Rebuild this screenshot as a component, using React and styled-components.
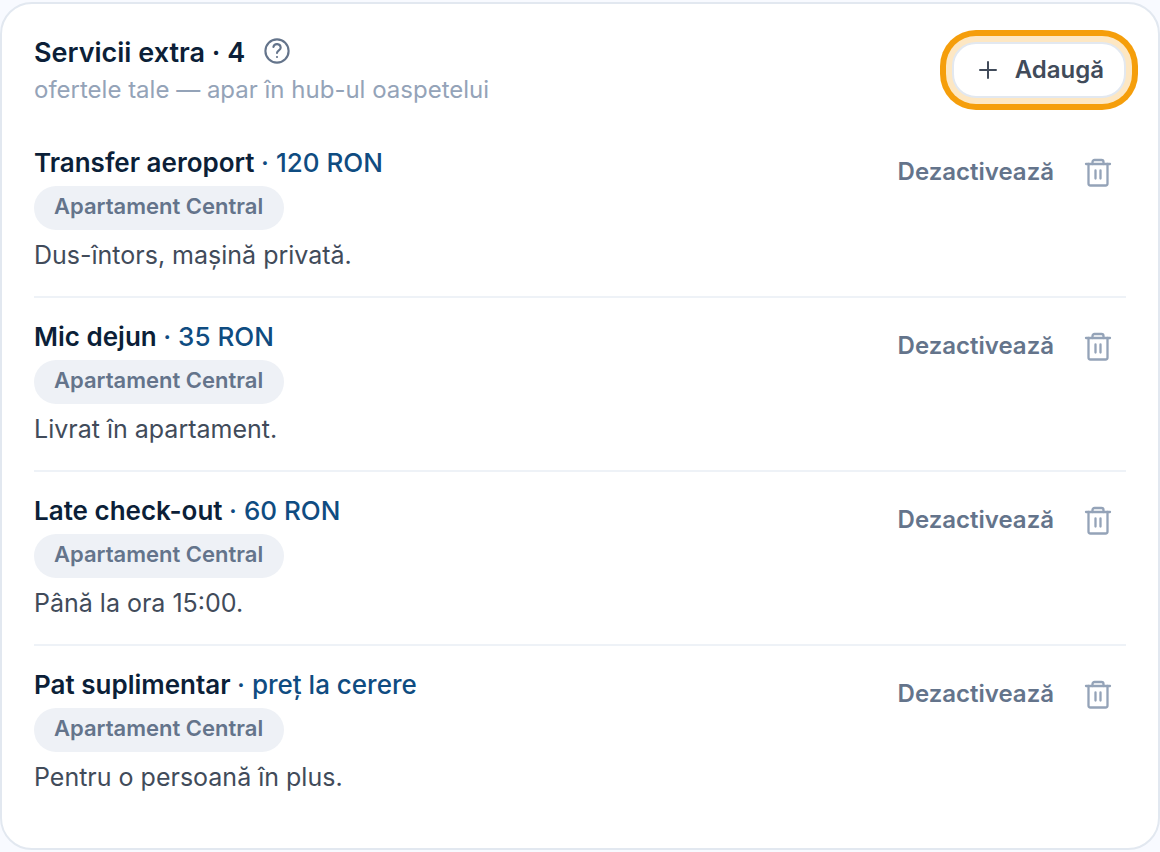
import React from "react";
import styled, { createGlobalStyle } from "styled-components";

const Global = createGlobalStyle`
  *, *::before, *::after { box-sizing: border-box; }
  body {
    margin: 0;
    background: #f8faff;
    font-family: Inter, "Liberation Sans", sans-serif;
    color: #0c1f38;
  }
  h2, h3, p, ul { margin: 0; padding: 0; }
  button { font-family: inherit; cursor: pointer; }
`;

const Card = styled.section`
  margin: 2px 0;
  padding: 30px 32px;
  background: #ffffff;
  border: 2px solid #e2e8f0;
  border-radius: 32px;
`;

const Header = styled.header`
  display: flex;
  justify-content: space-between;
  align-items: flex-start;
  padding-bottom: 16px;
`;

const TitleRow = styled.div`
  display: flex;
  align-items: flex-start;
  gap: 19px;
`;

const Title = styled.h2`
  font-size: 27px;
  line-height: 38px;
  font-weight: 600;
`;

const Subtitle = styled.p`
  font-size: 24px;
  line-height: 36px;
  color: #94a3b8;
`;

const IconButton = styled.button`
  display: flex;
  padding: 0;
  border: 0;
  background: none;
  color: #94a3b8;
`;

const HelpButton = styled(IconButton)`
  padding-top: 4px;
  color: #64748b;
`;

const AddButton = styled.button`
  display: flex;
  align-items: center;
  gap: 15px;
  height: 56px;
  margin-top: 8px;
  padding: 0 20px 0 22px;
  border: 2px solid #e2e8f0;
  border-radius: 24px;
  background: #ffffff;
  color: #414b5a;
  font-size: 24px;
  line-height: 36px;
  font-weight: 600;
  box-shadow: 0 0 0 6px #fde7c3, 0 0 0 12px #f59e0b;
`;

const List = styled.ul`
  list-style: none;
`;

const Item = styled.li`
  display: flex;
  justify-content: space-between;
  align-items: flex-start;
  padding: 20px 0 23px;

  & + & { border-top: 2px solid #eef2f7; }
`;

const Details = styled.div`
  display: flex;
  flex-direction: column;
  align-items: flex-start;
`;

const Name = styled.h3`
  font-size: 26px;
  line-height: 38px;
  font-weight: 600;
`;

const Price = styled.span`
  font-weight: 500;
  color: #0f4c81;
`;

const Tag = styled.span`
  height: 44px;
  margin: 4px 0 7px;
  padding: 0 21px 0 20px;
  border-radius: 22px;
  background: #eef1f6;
  color: #64748b;
  font-size: 22px;
  line-height: 40px;
  font-weight: 600;
`;

const Description = styled.p`
  font-size: 25px;
  line-height: 36px;
  color: #414b5a;
`;

const Actions = styled.div`
  display: flex;
  align-items: center;
  gap: 30px;
  padding: 10px 14px 0 0;
`;

const ToggleButton = styled.button`
  padding: 0;
  border: 0;
  background: none;
  color: #64748b;
  font-size: 24px;
  line-height: 36px;
  font-weight: 600;
`;

const HelpIcon = () => (
  <svg width="26" height="26" viewBox="0 0 26 26" fill="none" stroke="currentColor" strokeWidth="2.1" strokeLinecap="round" strokeLinejoin="round" aria-hidden="true">
    <circle cx="13" cy="13" r="11.6" />
    <path d="M9.4 9a3.7 3.7 0 0 1 7.3.7c0 2.6-3.7 2.7-3.7 5.3" />
    <path d="M13 19h.01" />
  </svg>
);

const PlusIcon = () => (
  <svg width="24" height="24" viewBox="0 0 24 24" fill="none" stroke="currentColor" strokeWidth="2" strokeLinecap="round" aria-hidden="true">
    <path d="M12 4v16M4 12h16" />
  </svg>
);

const TrashIcon = () => (
  <svg width="28" height="30" viewBox="0 0 28 30" fill="none" stroke="currentColor" strokeWidth="2.3" strokeLinecap="round" strokeLinejoin="round" aria-hidden="true">
    <path d="M2 7h24" />
    <path d="M8.5 7V5a2 2 0 0 1 2-2h7a2 2 0 0 1 2 2v2" />
    <path d="M4.5 7v19.5a2 2 0 0 0 2 2h15a2 2 0 0 0 2-2V7" />
    <path d="M11.5 13.5v8M16.5 13.5v8" />
  </svg>
);

const services = [
  { name: "Transfer aeroport", price: "120 RON", text: "Dus-întors, mașină privată." },
  { name: "Mic dejun", price: "35 RON", text: "Livrat în apartament." },
  { name: "Late check-out", price: "60 RON", text: "Până la ora 15:00." },
  { name: "Pat suplimentar", price: "preț la cerere", text: "Pentru o persoană în plus." },
];

export default function App() {
  return (
    <>
      <Global />
      <Card>
        <Header>
          <div>
            <TitleRow>
              <Title>Servicii extra · {services.length}</Title>
              <HelpButton type="button" aria-label="Ajutor">
                <HelpIcon />
              </HelpButton>
            </TitleRow>
            <Subtitle>ofertele tale — apar în hub-ul oaspetelui</Subtitle>
          </div>
          <AddButton type="button">
            <PlusIcon />
            Adaugă
          </AddButton>
        </Header>
        <List>
          {services.map((s) => (
            <Item key={s.name}>
              <Details>
                <Name>
                  {s.name} <Price>· {s.price}</Price>
                </Name>
                <Tag>Apartament Central</Tag>
                <Description>{s.text}</Description>
              </Details>
              <Actions>
                <ToggleButton type="button">Dezactivează</ToggleButton>
                <IconButton type="button" aria-label={`Șterge ${s.name}`}>
                  <TrashIcon />
                </IconButton>
              </Actions>
            </Item>
          ))}
        </List>
      </Card>
    </>
  );
}
